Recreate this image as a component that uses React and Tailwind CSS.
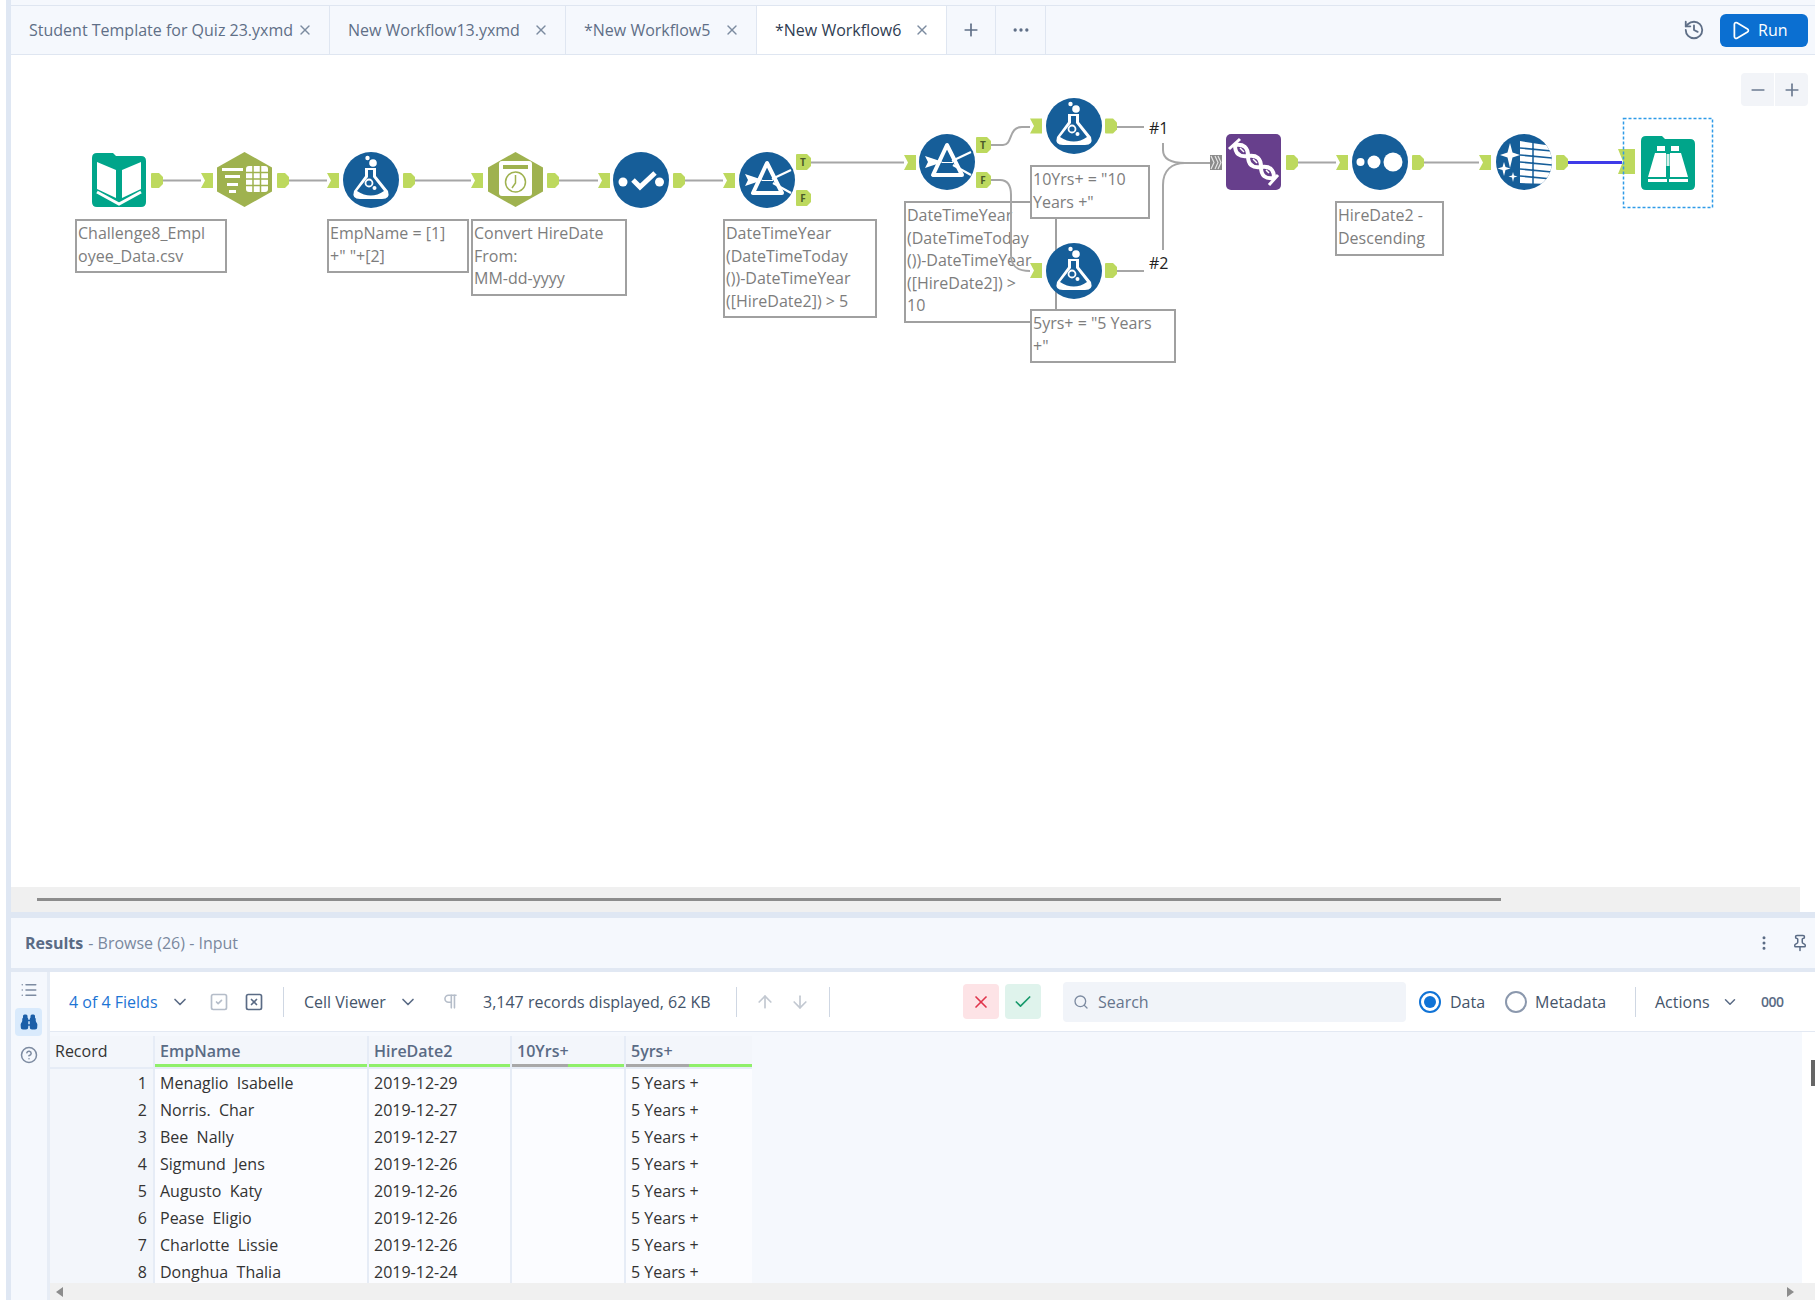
import {
  X, Plus, Ellipsis, History, Play, Minus, List, Binoculars, CircleHelp, ChevronDown, SquareCheck,
  SquareX, Pilcrow, ArrowUp, ArrowDown, Check, Search, EllipsisVertical, Pin,
} from 'lucide-react';

const BLUE = '#165e99';
const TEAL = '#00a58a';
const OLIVE = '#9fb24f';
const ANCHOR = '#bdd95e';
const WIRE = '#a6a6a6';

const tabs = [
  { name: 'Student Template for Quiz 23.yxmd', w: 'w-[319px]' },
  { name: 'New Workflow13.yxmd', w: 'w-[236px]' },
  { name: '*New Workflow5', w: 'w-[191px]' },
  { name: '*New Workflow6', w: 'w-[190px]', active: true },
];

const rows = [
  [1, 'Menaglio  Isabelle', '2019-12-29'],
  [2, 'Norris.  Char', '2019-12-27'],
  [3, 'Bee  Nally', '2019-12-27'],
  [4, 'Sigmund  Jens', '2019-12-26'],
  [5, 'Augusto  Katy', '2019-12-26'],
  [6, 'Pease  Eligio', '2019-12-26'],
  [7, 'Charlotte  Lissie', '2019-12-26'],
  [8, 'Donghua  Thalia', '2019-12-24'],
];

const GRID = 'grid grid-cols-[103px_212px_141px_112px_126px] gap-x-[2px]';

const Out = ({ x, y }) => (
  <path d={`M${x} ${y - 7.5} h7 l4 4 v7 l-4 4 h-7 q-1 0 -1 -1 v-13 q0 -1 1 -1z`} fill={ANCHOR} />
);
const In = ({ x, y }) => (
  <path d={`M${x} ${y - 7.5} h12 v15 h-12 l4 -7.5z`} fill={ANCHOR} />
);
const Flag = ({ x, y, label }) => (
  <g>
    <path d={`M${x + 1} ${y - 8} h10 l4 4 v8 l-4 4 h-10 q-1 0 -1 -1 v-14 q0 -1 1 -1z`} fill={ANCHOR} />
    <text x={x + 7} y={y + 4} textAnchor="middle" fontSize="10" fontWeight="700" fill="#4b5a2a" fontFamily="Open Sans, sans-serif">{label}</text>
  </g>
);

const Flask = ({ x, y }) => (
  <g transform={`translate(${x} ${y})`}>
    <circle cx="28" cy="28" r="28" fill={BLUE} />
    <circle cx="24.500" cy="6" r="2.200" fill="#fff" />
    <circle cx="30" cy="11" r="3.800" fill="#fff" />
    <path d="M22 16h11v8l12 15q2.500 8-6 8H17q-8.500 0-6-8l11-15z" fill="#fff" />
    <path d="M25 18h5v7l11 14q-13 9-27 0l11-14z" fill={BLUE} />
    <circle cx="26" cy="31" r="3.500" fill="none" stroke="#fff" strokeWidth="1.800" />
    <circle cx="31.500" cy="36" r="2" fill="#fff" />
  </g>
);

const FilterTool = ({ x, y }) => (
  <g transform={`translate(${x} ${y})`}>
    <circle cx="28" cy="28" r="28" fill={BLUE} />
    <path d="M28 11L14 41h29z" fill="none" stroke="#fff" strokeWidth="4" strokeLinejoin="round" />
    <path d="M6 22l18 6-18 6 3-6z" fill="#fff" />
    <path d="M23 28.500h11" stroke="#fff" strokeWidth="1" />
    <path d="M33 27l19-9M34 31l18 10" stroke="#fff" strokeWidth="2.200" />
  </g>
);

const Hexagon = ({ x, y, children }) => (
  <g transform={`translate(${x} ${y})`}>
    <path d="M27.500 0L55 15.500V39.500L27.500 55L0 39.500V15.500z" fill={OLIVE} />
    {children}
  </g>
);

const Folder = ({ x, y, children }) => (
  <g transform={`translate(${x} ${y})`}>
    <path d="M0 5q0-5 5-5h16l3 3h25q5 0 5 5v41q0 5-5 5H5q-5 0-5-5z" fill={TEAL} />
    {children}
  </g>
);

const Note = ({ className, lines }) => (
  <div className={`absolute border-2 border-[#a0a0a0] bg-white pl-[1px] pt-[1px] text-[16px] leading-[22.5px] text-[#7d7d7d] whitespace-nowrap ${className}`}>
    {lines.map((l) => <div key={l}>{l}</div>)}
  </div>
);

const Canvas = () => (
  <div className="relative h-[832px] bg-white overflow-hidden">
    <Note className="left-[64px] top-[164px] w-[152px] h-[54px]" lines={['Challenge8_Empl', 'oyee_Data.csv']} />
    <Note className="left-[316px] top-[164px] w-[142px] h-[54px]" lines={['EmpName = [1]', '+" "+[2]']} />
    <Note className="left-[460px] top-[164px] w-[156px] h-[77px]" lines={['Convert HireDate', 'From:', 'MM-dd-yyyy']} />
    <Note className="left-[712px] top-[164px] w-[154px] h-[99px]" lines={['DateTimeYear', '(DateTimeToday', '())-DateTimeYear', '([HireDate2]) > 5']} />
    <Note className="left-[893px] top-[146px] w-[153px] h-[122px]" lines={['DateTimeYear', '(DateTimeToday', '())-DateTimeYear', '([HireDate2]) >', '10']} />
    <Note className="left-[1019px] top-[110px] w-[120px] h-[54px]" lines={['10Yrs+ = "10', 'Years +"']} />
    <Note className="left-[1019px] top-[254px] w-[146px] h-[54px]" lines={['5yrs+ = "5 Years', '+"']} />
    <Note className="left-[1324px] top-[146px] w-[109px] h-[55px]" lines={['HireDate2 -', 'Descending']} />

    {/* workflow wires and tool icons, drawn in page coordinates */}
    <svg className="absolute left-0 top-0 w-[1804px] h-[832px]" viewBox="11 55 1804 832">
      <g fill="none" stroke={WIRE} strokeWidth="2">
        <path d="M163 180.500H201" />
        <path d="M289 180.500H327" />
        <path d="M415 180.500H471" />
        <path d="M559 180.500H598" />
        <path d="M685 180.500H723" />
        <path d="M811 162.500H904" />
        <path d="M991 145H1003C1013 145 1008 127 1022 127H1030" />
        <path d="M991 180H1000C1008 180 1011 186 1011 195V255C1011 267 1018 271 1030 271" />
        <path d="M1117 127H1144" />
        <path d="M1117 271H1144" />
        <path d="M1163 143V150C1163 160 1172 163 1185 163H1211" />
        <path d="M1163 250V185C1163 170 1172 163 1185 163" />
        <path d="M1298 162.500H1336" />
        <path d="M1424 162.500H1479" />
      </g>
      <path d="M1568 162.500H1622" stroke="#3f3be8" strokeWidth="3" />

      <Folder x={92} y={153}>
        <path d="M5 9l19 8v28L5 36zM49 9L30 17v28l19-9z" fill="#fff" />
        <path d="M5 39l22 12 22-12" fill="none" stroke="#fff" strokeWidth="3" />
      </Folder>
      <Out x={152} y={180.500} />
      <In x={201} y={180.500} />
      <Hexagon x={217} y={152}>
        <path d="M5 16h21v3H5zM8 23h15v3H8zM10 31h11v3H10zM12 38h7v3h-7z" fill="#fff" />
        <rect x="29" y="14" width="22" height="26" rx="3" fill="#fff" />
        <path d="M29 20.500h22M29 27h22M29 33.500h22M36 14v26M43.500 14v26" stroke={OLIVE} strokeWidth="1.500" />
      </Hexagon>
      <Out x={278} y={180.500} />
      <In x={327} y={180.500} />
      <Flask x={343} y={152} />
      <Out x={404} y={180.500} />
      <In x={471} y={180.500} />
      <Hexagon x={488} y={152}>
        <rect x="11" y="9" width="33" height="35" rx="3" fill="#fff" />
        <rect x="15" y="13" width="25" height="4" fill={OLIVE} />
        <circle cx="27.500" cy="30" r="10" fill="none" stroke={OLIVE} strokeWidth="1.500" />
        <path d="M27.500 23v8l-3.500 5" fill="none" stroke={OLIVE} strokeWidth="1.500" />
      </Hexagon>
      <Out x={548} y={180.500} />
      <In x={598} y={180.500} />
      <g transform="translate(613 152)">
        <circle cx="28" cy="28" r="28" fill={BLUE} />
        <circle cx="10" cy="30" r="4.500" fill="#fff" />
        <path d="M20 28l7 7 15-14" fill="none" stroke="#fff" strokeWidth="5" />
        <circle cx="46.500" cy="30" r="4.500" fill="#fff" />
      </g>
      <Out x={674} y={180.500} />
      <In x={723} y={180.500} />
      <FilterTool x={739} y={152} />
      <Flag x={796} y={162} label="T" />
      <Flag x={796} y={198} label="F" />
      <In x={904} y={162.500} />
      <FilterTool x={919} y={134} />
      <Flag x={976} y={145} label="T" />
      <Flag x={976} y={180} label="F" />
      <In x={1030} y={126} />
      <Flask x={1046} y={98} />
      <Out x={1106} y={126} />
      <In x={1030} y={270.500} />
      <Flask x={1046} y={243} />
      <Out x={1106} y={270.500} />

      {/* union tool */}
      <rect x="1210" y="155" width="12" height="15" fill="#8b8b8b" />
      <path d="M1211 156l3 6.500-3 6.500M1215 156l3 6.500-3 6.500M1218 156l3 6.500-3 6.500" fill="none" stroke="#e6e6e6" strokeWidth="1.200" />
      <g transform="translate(1226 134)">
        <rect width="55" height="56" rx="5" fill="#673f8c" />
        <path d="M9 11Q22 9 22 22Q22 35 35 33Q48 31 48 44" fill="none" stroke="#fff" strokeWidth="4" />
        <path d="M9 11Q9 24 22 22Q35 20 35 33Q35 46 48 44" fill="none" stroke="#fff" strokeWidth="4" />
        <path d="M3 15L14 5M43 51L52 41" stroke="#fff" strokeWidth="3" />
        <path d="M14 14l4 4M12 18l3 3M27 25l4 4M25 29l3 3M40 36l3 3" stroke="#fff" strokeWidth="1.500" />
      </g>
      <Out x={1287} y={162.500} />
      <In x={1336} y={162.500} />
      <g transform="translate(1352 134)">
        <circle cx="28" cy="28" r="28" fill={BLUE} />
        <circle cx="8.500" cy="28" r="4" fill="#fff" />
        <circle cx="22" cy="28" r="6.500" fill="#fff" />
        <circle cx="41" cy="28" r="9.500" fill="#fff" />
      </g>
      <Out x={1413} y={162.500} />
      <In x={1479} y={162.500} />
      <g transform="translate(1496 134)">
        <clipPath id="autofield"><circle cx="28" cy="28" r="28" /></clipPath>
        <circle cx="28" cy="28" r="28" fill={BLUE} />
        <g clipPath="url(#autofield)">
          <path d="M24 7L56 12V50L24 49z" fill="#fff" />
          <path d="M24 14l32 3M24 21l32 3M24 28l32 3M24 35l32 3M24 42l32 3M37 8v42" stroke={BLUE} strokeWidth="1.500" />
        </g>
        <path d="M14 9l2.500 9.500L24 21l-7.500 2.500L14 34l-2.500-10.500L4 21l7.500-2.500z" fill="#fff" />
        <path d="M8 28l1.500 5 5 1.500-5 1.500L8 42l-1.500-6-5-1.500 5-1.500z" fill="#fff" />
        <path d="M17 38l1 3.500 3.500 1-3.500 1L17 48l-1-4.500-3.500-1 3.500-1z" fill="#fff" />
      </g>
      <Out x={1557} y={162.500} />
      <path d="M1618 149h17v25h-17l5-12.500z" fill={ANCHOR} />
      <Folder x={1641} y={136}>
        <path d="M16 10h8v5h-8zM30 10h8v5h-8zM14 17h11v24H7zM29 17h11l7 24H29zM7 43h19v3H7zM28 43h19v3H28z" fill="#fff" />
        <path d="M25.500 18h3v12h-3z" fill="#d6f0ea" />
      </Folder>
      <rect x="1623.500" y="118.500" width="89" height="89" fill="none" stroke="#2f9be8" strokeWidth="1.500" strokeDasharray="3 2" />
    </svg>

    <span className="absolute left-[1138px] top-[63px] text-[16px] leading-[20px] text-[#222]">#1</span>
    <span className="absolute left-[1138px] top-[198px] text-[16px] leading-[20px] text-[#222]">#2</span>

    <div className="absolute left-[1730px] top-[18px] flex h-[33px] gap-[1px] rounded text-[#6b7a90]">
      <div className="flex w-[33px] items-center justify-center rounded-l bg-[#f2f4f8]"><Minus size={20} /></div>
      <div className="flex w-[33px] items-center justify-center rounded-r bg-[#f2f4f8]"><Plus size={20} /></div>
    </div>
  </div>
);

const Toolbar = () => (
  <div className="flex h-[60px] items-center border-b border-[#e3e9f3] bg-white text-[16px] text-[#44546a] whitespace-nowrap">
    <span className="ml-[19px] w-[93px] text-[#1c74d4]">4 of 4 Fields</span>
    <ChevronDown size={20} className="ml-[8px] text-[#5a6b85]" />
    <SquareCheck size={20} className="ml-[19px] text-[#b5bdc9]" />
    <SquareX size={20} className="ml-[15px] text-[#5a6b85]" />
    <div className="ml-[19px] h-[30px] w-px bg-[#cfd7e3]" />
    <span className="ml-[20px] w-[85px]">Cell Viewer</span>
    <ChevronDown size={20} className="ml-[9px] text-[#5a6b85]" />
    <Pilcrow size={19} className="ml-[23px] text-[#b5bdc9]" />
    <span className="ml-[23px] w-[235px]">3,147 records displayed, 62 KB</span>
    <div className="ml-[18px] h-[30px] w-px bg-[#cfd7e3]" />
    <ArrowUp size={20} className="ml-[18px] text-[#c2c8d1]" />
    <ArrowDown size={20} className="ml-[15px] text-[#c2c8d1]" />
    <div className="ml-[19px] h-[30px] w-px bg-[#cfd7e3]" />
    <div className="ml-[133px] flex h-[35px] w-[36px] items-center justify-center rounded bg-[#fde3e6] text-[#e0344b]"><X size={20} /></div>
    <div className="ml-[6px] flex h-[35px] w-[36px] items-center justify-center rounded bg-[#dff3ec] text-[#17996b]"><Check size={20} /></div>
    <div className="ml-[22px] flex h-[40px] w-[343px] items-center rounded bg-[#f1f4f9] pl-[10px] text-[#66758c]">
      <Search size={16} className="text-[#7d8ba1]" />
      <span className="ml-[9px]">Search</span>
    </div>
    <div className="ml-[13px] flex h-[22px] w-[22px] items-center justify-center rounded-full border-2 border-[#1073d6]">
      <div className="h-[12px] w-[12px] rounded-full bg-[#1073d6]" />
    </div>
    <span className="ml-[9px] w-[35px]">Data</span>
    <div className="ml-[20px] h-[22px] w-[22px] rounded-full border-2 border-[#8b98ad]" />
    <span className="ml-[8px] w-[73px]">Metadata</span>
    <div className="ml-[27px] h-[30px] w-px bg-[#cfd7e3]" />
    <span className="ml-[19px] w-[57px]">Actions</span>
    <ChevronDown size={18} className="ml-[9px] text-[#5a6b85]" />
    <span className="ml-[22px] text-[14px] font-semibold tracking-[-0.5px] text-[#5a6b85]">000</span>
  </div>
);

const HeadCell = ({ label, bar, dark }) => (
  <div className={`relative h-[31px] bg-[#f3f6fb] pl-[5px] pt-[3px] ${dark ? 'text-[#333]' : 'text-[#5a6b85] font-semibold'}`}>
    {label}
    {bar && (
      <div className="absolute bottom-0 left-0 right-0 h-[3px] bg-[#8fef6a]">
        {bar === 'half' && <div className="h-full w-1/2 bg-[#a8a8a8]" />}
      </div>
    )}
  </div>
);

const DataTable = () => (
  <div className="h-[251px] w-[702px] overflow-hidden pt-[4px] text-[16px] leading-[24px] text-[#333]">
    <div className="h-full bg-[#e6ecf6]">
      <div className={`${GRID} mb-[2px]`}>
        <HeadCell label="Record" dark />
        <HeadCell label="EmpName" bar="full" />
        <HeadCell label="HireDate2" bar="full" />
        <HeadCell label="10Yrs+" bar="half" />
        <HeadCell label="5yrs+" bar="half" />
      </div>
      {rows.map(([n, name, date]) => (
        <div key={n} className={`${GRID} mb-[3px] h-[24px] leading-[28px] whitespace-pre`}>
          <div className="bg-[#f3f6fb] pr-[6px] text-right">{n}</div>
          <div className="bg-[#fbfcff] pl-[5px]">{name}</div>
          <div className="bg-[#fbfcff] pl-[5px]">{date}</div>
          <div className="bg-[#fbfcff]" />
          <div className="bg-[#fbfcff] pl-[5px]">5 Years +</div>
        </div>
      ))}
    </div>
  </div>
);

export default function App() {
  return (
    <div className="flex h-[1300px] w-[1815px] overflow-hidden bg-white font-['Open_Sans',sans-serif]">
      <div className="w-[6px] shrink-0 bg-white" />
      <div className="w-[5px] shrink-0 bg-[#dfe7f3]" />
      <div className="flex w-[1804px] flex-col">
        {/* tab bar */}
        <div className="h-[5px] bg-[#f5f8fd]" />
        <div className="flex h-[50px] items-center border-y border-[#dfe6f1] bg-[#f5f8fd] text-[16px] text-[#5f6f87]">
          {tabs.map((t) => (
            <div
              key={t.name}
              className={`flex h-full items-center justify-between border-r border-[#dfe6f1] pl-[18px] pr-[16px] whitespace-nowrap ${t.w} ${t.active ? 'relative z-10 h-[49px] self-start bg-white pb-px text-[#2f3d52]' : ''}`}
            >
              <span>{t.name}</span>
              <X size={16} className="text-[#7c8ba0]" />
            </div>
          ))}
          <div className="flex h-full w-[49px] items-center justify-center border-r border-[#dfe6f1]"><Plus size={20} className="text-[#5f6f87]" /></div>
          <div className="flex h-full w-[50px] items-center justify-center border-r border-[#dfe6f1]"><Ellipsis size={20} className="text-[#5f6f87]" /></div>
          <History size={22} className="ml-auto text-[#5f6f87]" />
          <div className="ml-[15px] mr-[7px] flex h-[33px] w-[88px] items-center rounded-md bg-[#0b6fd1] pl-[10px] text-white">
            <Play size={21} />
            <span className="ml-[7px]">Run</span>
          </div>
        </div>

        <Canvas />

        {/* canvas scrollbar */}
        <div className="flex h-[25px] bg-white">
          <div className="flex w-[1789px] items-center bg-[#f0f0f0] pl-[26px]">
            <div className="h-[3px] w-[1464px] bg-[#8c8c8c]" />
          </div>
        </div>

        {/* results panel */}
        <div className="h-[6px] bg-[#dfe7f3]" />
        <div className="flex h-[54px] shrink-0 items-center border-b-4 border-[#e1e8f3] bg-[#f5f8fd] pl-[14px] pr-[6px] text-[16px] text-[#7a889d]">
          <span className="font-bold text-[#5a6b85]">Results</span>
          <span className="ml-[5px]">- Browse (26) - Input</span>
          <EllipsisVertical size={18} className="ml-auto text-[#5a6b85]" />
          <Pin size={18} className="ml-[18px] text-[#5a6b85]" />
        </div>
        <div className="flex flex-1">
          <div className="flex w-[39px] flex-col items-center border-r-[3px] border-[#e7edf6] bg-[#f5f8fd] pt-[9px] pr-px">
            <List size={18} className="text-[#7d8ba1]" />
            <div className="mt-[9px] flex h-[28px] w-[27px] items-center justify-center rounded bg-[#d9eafc]"><Binoculars size={18} className="text-[#1c5fa8]" fill="currentColor" /></div>
            <CircleHelp size={18} className="mt-[10px] text-[#7d8ba1]" />
          </div>
          <div className="flex flex-1 flex-col">
            <Toolbar />
            <div className="relative flex flex-1 bg-[#f5f8fd]">
              <DataTable />
              <div className="absolute bottom-[17px] right-0 top-0 w-[13px] bg-white">
                <div className="absolute right-0 top-[28px] h-[26px] w-[4px] bg-[#666]" />
              </div>
              <div className="absolute bottom-0 left-0 right-0 flex h-[17px] items-center justify-between bg-[#f0f0f0] pl-[6px] pr-[21px] text-[#8c8c8c]">
                <div className="h-0 w-0 border-y-[5px] border-r-[7px] border-y-transparent border-r-[#8c8c8c]" />
                <div className="h-0 w-0 border-y-[5px] border-l-[7px] border-y-transparent border-l-[#8c8c8c]" />
              </div>
            </div>
          </div>
        </div>
      </div>
    </div>
  );
}
